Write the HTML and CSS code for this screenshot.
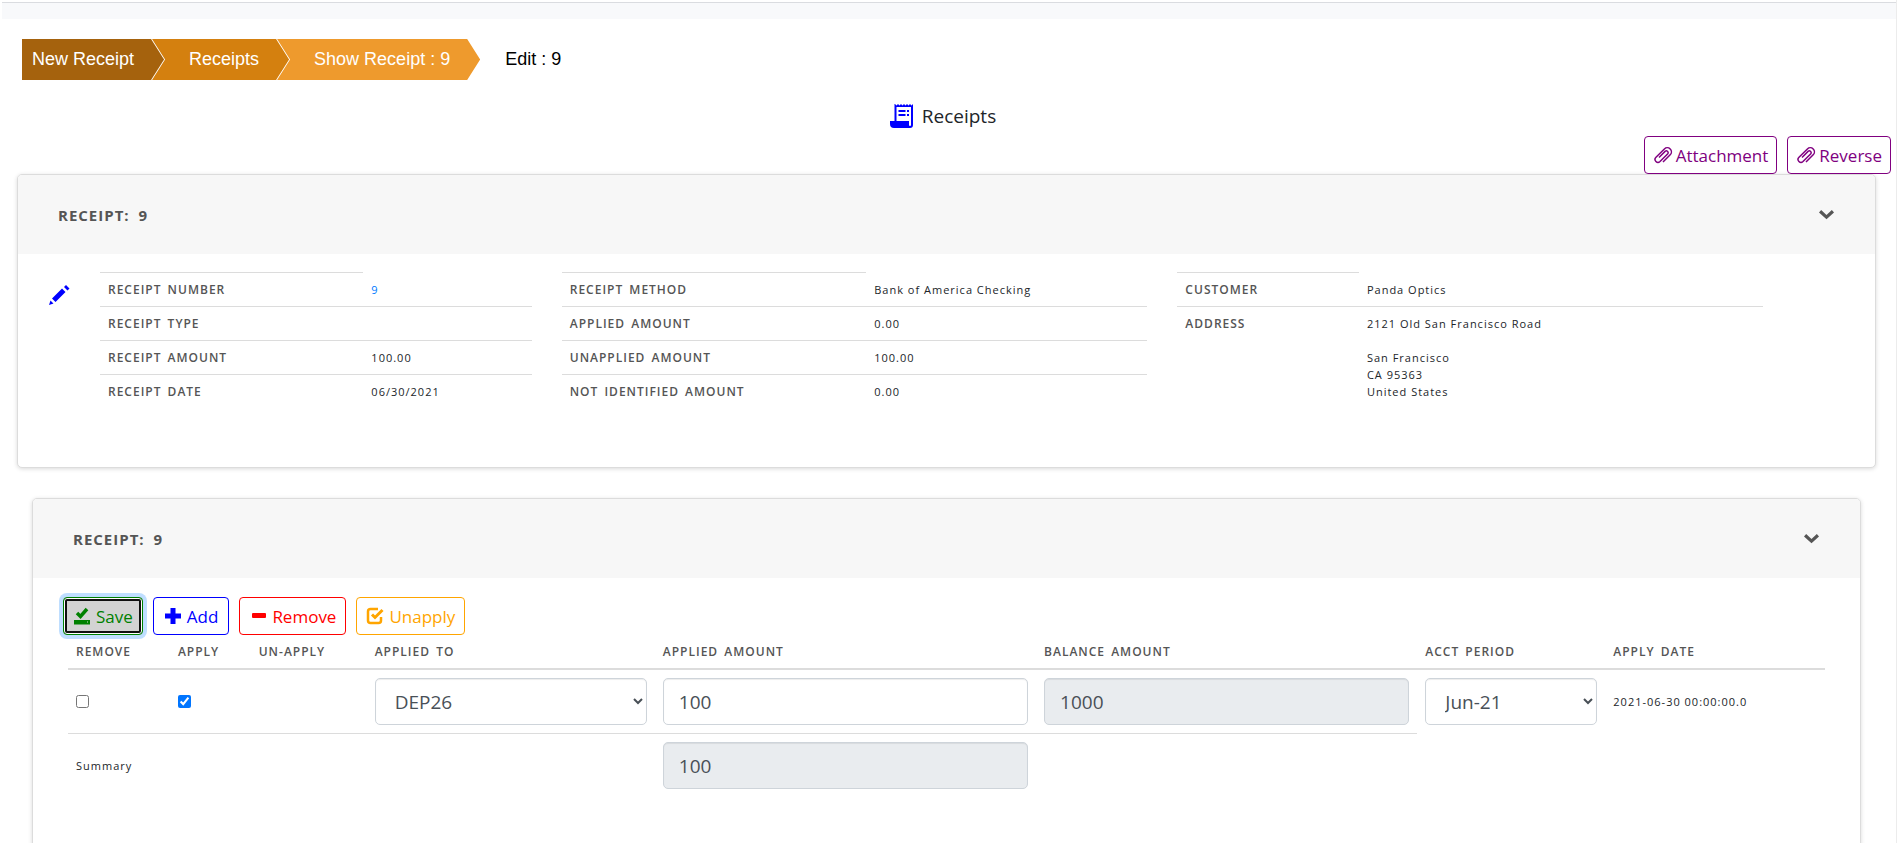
FILE: index.html
```html
<!DOCTYPE html>
<html lang="en">
<head>
<meta charset="utf-8">
<title>Receipts</title>
<link rel="stylesheet" href="styles.css">
</head>
<body>
<div class="topband"></div>
<nav class="crumbs" aria-label="Breadcrumb">
  <a class="crumb crumb-first" href="#">New Receipt</a>
  <a class="crumb crumb-second" href="#">Receipts</a>
  <a class="crumb crumb-third" href="#">Show Receipt : 9</a>
  <span class="crumb-current">Edit : 9</span>
</nav>
<main class="page">
  <h1 class="page-title">
    <svg class="icon-receipt" viewBox="0 0 24 24" fill="#00f"><path d="M5 0l1.500 1.500L8 0l1.500 1.500L11 0l1.500 1.500L14 0l1.500 1.500L17 0l1.500 1.500L20 0l1.500 1.500L23 0v21a3 3 0 0 1-3 3H4a4 4 0 0 1-4-4v-3h4.500V0zM19 21a1 1 0 0 0 2 0V3H6.500v14H19z" fill-rule="evenodd"/><path d="M8.500 6h7v2h-7zM8.500 10h7v2h-7zM17 6h2v2h-2zM17 10h2v2h-2z"/></svg>
    Receipts
  </h1>
  <div class="top-actions">
    <button class="btn btn-purple" type="button">
      <svg class="icon" viewBox="0 0 20 20" fill="none" stroke="currentColor" stroke-width="1.500"><path d="M10 17l7.200-7.200a4 4 0 0 0-5.800-5.800L3 12.300a2.900 2.900 0 0 0 4 4.200l7.800-7.800a1.800 1.800 0 0 0-2.500-2.500L6 12.500"/></svg>
      Attachment
    </button>
    <button class="btn btn-purple" type="button">
      <svg class="icon" viewBox="0 0 20 20" fill="none" stroke="currentColor" stroke-width="1.500"><path d="M10 17l7.200-7.200a4 4 0 0 0-5.800-5.800L3 12.300a2.900 2.900 0 0 0 4 4.200l7.800-7.800a1.800 1.800 0 0 0-2.500-2.500L6 12.500"/></svg>
      Reverse
    </button>
  </div>

  <section class="card">
    <header class="card-header">
      <h2 class="card-title">Receipt: 9</h2>
      <button class="toggle" type="button" aria-label="Collapse receipt details"><svg class="chevron" viewBox="0 0 14 10"><path d="M1 2L7 7.500 13 2" fill="none" stroke="currentColor" stroke-width="3"/></svg></button>
    </header>
    <div class="details">
      <a class="edit" href="#" aria-label="Edit receipt"><svg class="icon-pencil" viewBox="0 0 22 22" fill="#00f"><path d="M1 21l1.500-4.500 3 3zM4 14.500L14 4.500l3.500 3.500-10 10zM16 3l2-2 3.500 3.500-2 2z"/></svg></a>
      <div class="detail-grid">
        <table class="facts">
          <tr><th scope="row">Receipt Number</th><td class="no-line"><a class="link" href="#">9</a></td></tr>
          <tr><th scope="row">Receipt Type</th><td></td></tr>
          <tr><th scope="row">Receipt Amount</th><td>100.00</td></tr>
          <tr><th scope="row">Receipt Date</th><td>06/30/2021</td></tr>
        </table>
        <table class="facts facts-wide">
          <tr><th scope="row">Receipt Method</th><td class="no-line">Bank of America Checking</td></tr>
          <tr><th scope="row">Applied Amount</th><td>0.00</td></tr>
          <tr><th scope="row">Unapplied Amount</th><td>100.00</td></tr>
          <tr><th scope="row">Not Identified Amount</th><td>0.00</td></tr>
        </table>
        <table class="facts facts-customer">
          <tr><th scope="row">Customer</th><td class="no-line">Panda Optics</td></tr>
          <tr><th scope="row">Address</th><td>2121 Old San Francisco Road<br><br>San Francisco<br>CA 95363<br>United States</td></tr>
        </table>
      </div>
    </div>
  </section>

  <section class="card card-inset">
    <header class="card-header">
      <h2 class="card-title">Receipt: 9</h2>
      <button class="toggle" type="button" aria-label="Collapse applications"><svg class="chevron" viewBox="0 0 14 10"><path d="M1 2L7 7.500 13 2" fill="none" stroke="currentColor" stroke-width="3"/></svg></button>
    </header>
    <div class="apply">
      <div class="toolbar">
        <button class="btn btn-green" type="button">
          <svg class="icon" viewBox="0 0 18 18" fill="currentColor"><path d="M1 13h16v4.500H1z"/><path d="M4 6l3.500 3.500L14 2" fill="none" stroke="currentColor" stroke-width="3.500"/><path d="M14 14.500h1v1h-1z" fill="#d3d3d3"/></svg>
          Save
        </button>
        <button class="btn btn-blue" type="button">
          <svg class="icon" viewBox="0 0 18 18" fill="currentColor"><path d="M6.500 1h5v5.500H17v5h-5.500V17h-5v-5.500H1v-5h5.500z"/></svg>
          Add
        </button>
        <button class="btn btn-red" type="button">
          <svg class="icon" viewBox="0 0 18 18"><rect x="3" y="6" width="14" height="5" rx="1" fill="currentColor"/></svg>
          Remove
        </button>
        <button class="btn btn-orange" type="button">
          <svg class="icon" viewBox="0 0 18 18" fill="none" stroke="currentColor"><path d="M12 2H4.500A2.500 2.500 0 0 0 2 4.500v9A2.500 2.500 0 0 0 4.500 16h8a2.500 2.500 0 0 0 2.500-2.500V10" stroke-width="2.500"/><path d="M6 7.500l3 3L16.500 3" stroke-width="3"/></svg>
          Unapply
        </button>
      </div>
      <table class="lines">
        <colgroup><col class="c-remove"><col class="c-apply"><col class="c-unapply"><col class="c-to"><col class="c-amount"><col class="c-amount"><col class="c-period"><col></colgroup>
        <thead>
          <tr><th scope="col">Remove</th><th scope="col">Apply</th><th scope="col">Un-Apply</th><th scope="col">Applied To</th><th scope="col">Applied Amount</th><th scope="col">Balance Amount</th><th scope="col">Acct Period</th><th scope="col">Apply Date</th></tr>
        </thead>
        <tbody>
          <tr>
            <td><input class="check" type="checkbox" aria-label="Remove"></td>
            <td><input class="check" type="checkbox" aria-label="Apply" checked></td>
            <td></td>
            <td><select class="field" aria-label="Applied To"><option>DEP26</option></select></td>
            <td><input class="field" type="text" aria-label="Applied Amount" value="100"></td>
            <td><input class="field" type="text" aria-label="Balance Amount" value="1000" readonly></td>
            <td><select class="field" aria-label="Acct Period"><option>Jun-21</option></select></td>
            <td>2021-06-30 00:00:00.0</td>
          </tr>
          <tr class="summary">
            <td>Summary</td><td></td><td></td><td></td>
            <td><input class="field" type="text" aria-label="Total applied amount" value="100" readonly></td>
            <td></td>
          </tr>
        </tbody>
      </table>
    </div>
  </section>
</main>
</body>
</html>
```
FILE: styles.css
```css
* { box-sizing: border-box; }
body {
  margin: 0;
  border-right: 1px solid #ececec;
  background: #fff;
  color: #212529;
  font-family: "Open Sans", "Noto Sans", sans-serif;
  font-size: 18px;
}

.topband {
  height: 17px;
  margin: 2px 0 0 2px;
  border-top: 1px solid #dadce0;
  background: #f8f9fb;
}

/* Breadcrumb arrows */
.crumbs {
  display: flex;
  height: 41px;
  margin: 20px 0 0 22px;
  font-family: "Liberation Sans", Arial, sans-serif;
  font-size: 18px;
  line-height: 40px;
}
.crumb {
  padding: 0 30px 0 37px;
  margin-left: -12px;
  color: #fff;
  text-decoration: none;
  clip-path: polygon(0 0, calc(100% - 13px) 0, 100% 50%, calc(100% - 13px) 100%, 0 100%, 13px 50%);
}
.crumb-first {
  margin-left: 0;
  padding-left: 10px;
  background: #a5620d;
  clip-path: polygon(0 0, calc(100% - 13px) 0, 100% 50%, calc(100% - 13px) 100%, 0 100%);
}
.crumb-second { background: #d4800f; }
.crumb-third { background: #ee9a2d; }
.crumb-current { padding-left: 25px; color: #000; }

.page-title {
  display: flex;
  justify-content: center;
  align-items: center;
  gap: 8px;
  height: 56px;
  margin: 0;
  padding-right: 10px;
  padding-top: 16px;
  font-size: 19px;
  font-weight: 400;
}
.icon-receipt { width: 24px; height: 24px; }

.top-actions {
  display: flex;
  justify-content: flex-end;
  gap: 10px;
  padding-right: 5px;
}
.btn {
  display: inline-flex;
  align-items: center;
  gap: 5px;
  height: 38px;
  padding: 0 9px;
  border: 1px solid currentColor;
  border-radius: 4px;
  background: #fff;
  font: inherit;
  font-size: 17px;
}
.icon { width: 18px; height: 18px; }
.btn-purple { color: #800080; gap: 3px; padding: 0 8px; }
.btn-purple .icon { width: 20px; height: 20px; }
.btn-green {
  color: #008000;
  background: #d3d3d3;
  box-shadow: 0 0 0 4px #bfdeff, inset 0 0 0 1px #fff, inset 0 0 0 3px #101010;
}
.btn-blue { color: #00f; padding: 0 10px; }
.btn-red { color: #f00; }
.btn-orange { color: #ffa500; }

/* Cards */
.card {
  margin: 0 20px 30px 17px;
  border: 1px solid #dcdcdc;
  border-radius: 5px;
  background: #fff;
  box-shadow: 0 1px 4px rgba(0, 0, 0, .15);
}
.card-inset { margin: 0 35px 0 32px; min-height: 360px; }
.card-header {
  display: flex;
  justify-content: space-between;
  align-items: center;
  height: 79px;
  padding: 0 41px 0 40px;
  border-radius: 4px 4px 0 0;
  background: #f7f7f7;
  color: #555;
}
.card-title {
  margin: 0;
  font-size: 15px;
  font-weight: 700;
  letter-spacing: 1px;
  word-spacing: 4px;
  text-transform: uppercase;
}
.toggle { display: flex; padding: 0; border: 0; background: none; color: inherit; }
.chevron { width: 15px; height: 11px; }

.details {
  display: flex;
  min-height: 213px;
  padding: 18px 97px 0 0;
}
.edit { flex: none; width: 67px; padding: 12px 0 0 30px; }
.icon-pencil { width: 22px; height: 22px; }
.detail-grid {
  flex: 1;
  display: grid;
  grid-template-columns: 3fr 4fr 4fr;
  align-items: start;
}
table {
  border-collapse: collapse;
  table-layout: fixed;
  font-size: 11px;
  line-height: 17px;
  letter-spacing: 1px;
}
th {
  color: #555;
  font-size: 12px;
  font-weight: 600;
  text-align: left;
  text-transform: uppercase;
  word-spacing: 2px;
}
.facts { margin: 0 15px; }
.facts th, .facts td {
  height: 34px;
  padding: 8px;
  border-top: 1px solid #dcdcdc;
  vertical-align: top;
}
.facts th { width: 61%; }
.facts-wide th { width: 52%; }
.facts-customer th { width: 31%; }
.facts td.no-line { border-top: 0; }
.link { color: #007bff; text-decoration: none; }

.apply { padding: 19px 35px 0; }
.toolbar { display: flex; gap: 10px; margin-left: -5px; }
.lines { width: 100%; }
.lines th { padding: 8px; border-bottom: 2px solid #dcdcdc; }
.lines td { padding: 8px; }
.summary td { border-top: 1px solid #dcdcdc; }
.c-remove { width: 5.8%; }
.c-apply { width: 4.6%; }
.c-unapply { width: 6.6%; }
.c-to { width: 16.4%; }
.c-amount { width: 21.7%; }
.c-period { width: 10.7%; }
.check { display: block; width: 13px; height: 13px; margin: 0; accent-color: #0075ff; }
.field {
  display: block;
  width: 100%;
  height: 47px;
  padding: 0 15px;
  border: 1px solid #ced4da;
  border-radius: 5px;
  background-color: #fff;
  box-shadow: inset 0 1px 1px rgba(0, 0, 0, .075);
  color: #495057;
  font: inherit;
  font-size: 19px;
  letter-spacing: normal;
}
input.field:read-only { background-color: #e9ecef; }
```
